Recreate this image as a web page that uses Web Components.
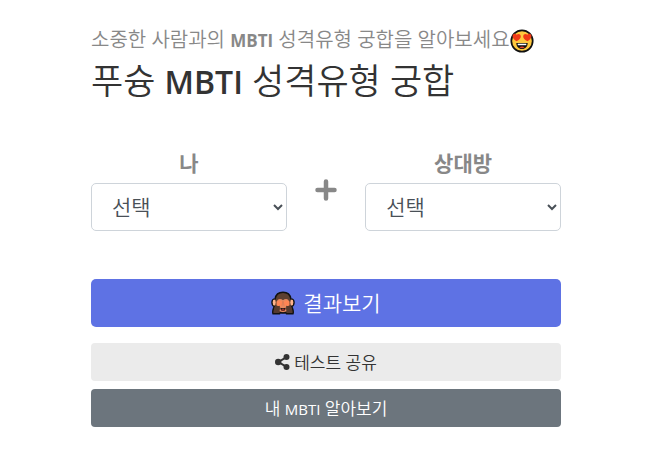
<!DOCTYPE html>
<html lang="ko">
<head>
<meta charset="utf-8">
<meta name="viewport" content="width=device-width, initial-scale=1">
<title>푸슝 MBTI 성격유형 궁합</title>
<style>
body { margin: 0; background: #fff; color: #333; font-family: "Open Sans", "Noto Sans CJK KR", sans-serif; font-size: 16px; }
</style>
</head>
<body>
<match-page></match-page>
<script>
const define = (name, html, setup) => {
  const template = document.createElement('template');
  template.innerHTML = html;
  customElements.define(name, class extends HTMLElement {
    constructor() {
      super();
      this.attachShadow({ mode: 'open' }).append(template.content.cloneNode(true));
    }
    connectedCallback() { if (setup) setup(this, this.shadowRoot); }
  });
};

define('love-face', `
<style>:host{display:inline-block;width:24px;height:24px} svg{display:block;width:100%;height:100%}</style>
<svg viewBox="0 0 24 24" aria-hidden="true">
  <circle cx="12" cy="12" r="10.7" fill="#ffc83d" stroke="#111" stroke-width="1.7"/>
  <path d="M6.5 12.2C3.8 10.5 2.2 8.6 2.6 6.5 3 4.500 5.400 4 6.700 5.800 8.100 4.400 10.600 5 10.800 7.200 10.900 9.300 9.200 11.100 6.500 12.200Z" fill="#f03a17"/>
  <path d="M17.500 12.200C20.200 10.500 21.800 8.600 21.400 6.500 21 4.500 18.600 4 17.300 5.800 15.900 4.400 13.400 5 13.200 7.200 13.100 9.300 14.800 11.100 17.500 12.200Z" fill="#f03a17"/>
  <path d="M6.300 14H17.700C17.700 17.600 15.300 20 12 20S6.300 17.600 6.300 14Z" fill="#111"/>
  <path d="M7.700 14.700H16.300V16.200H7.700Z" fill="#fff"/>
  <path d="M9.300 18.300Q12 16.800 14.700 18.300 12 20 9.300 18.300Z" fill="#e8432c"/>
</svg>`);

define('shy-monkey', `
<style>:host{display:inline-block;width:24px;height:24px} svg{display:block;width:100%;height:100%}</style>
<svg viewBox="0 0 24 24" aria-hidden="true">
  <path d="M12 1.300C7.500 1.300 4.700 4 4.100 8 1.900 7.900 1 9.300 1 11.300S2 15 3.400 15.400C2.200 17.700 1.200 20.200 2 22.700H8.700L9.300 21.500Q12 22.700 14.700 21.500L15.300 22.700H22C22.800 20.200 21.800 17.700 20.600 15.400 22 15 23 13.300 23 11.300S22.100 7.900 19.900 8C19.300 4 16.500 1.300 12 1.300Z" fill="#5d4031" stroke="#111" stroke-width="1.500" stroke-linejoin="round"/>
  <ellipse cx="3.200" cy="11.500" rx="1.500" ry="2.900" fill="#ffb48c"/>
  <ellipse cx="20.800" cy="11.500" rx="1.500" ry="2.900" fill="#ffb48c"/>
  <path d="M6 11C6 7.700 9.700 7.100 12 9.300 14.300 7.100 18 7.700 18 11L17 17.500Q16 21 12 21T7 17.500Z" fill="#e98a60"/>
  <path d="M5.500 10.600Q8 8.400 11.400 10.700L10.800 14.500Q8 15.700 5.500 14.500ZM18.500 10.600Q16 8.400 12.600 10.700L13.200 14.500Q16 15.700 18.500 14.500Z" fill="#ff8655"/>
  <path d="M11.600 10.300L11 14.700M12.400 10.300L13 14.700" stroke="#c96a48" stroke-width=".4" fill="none"/>
  <path d="M4.200 14.300Q6.500 15.500 8.800 14.800 9.600 18.500 8 22H2.800Q2.500 18 4.200 14.300ZM19.800 14.300Q17.500 15.500 15.200 14.800 14.400 18.500 16 22H21.200Q21.500 18 19.800 14.300Z" fill="#553a2e"/>
  <path d="M9.300 16.800Q12 17.600 14.700 16.800 14.500 20 12 20T9.300 16.800Z" fill="#241414"/>
  <path d="M10.200 18.800Q12 17.800 13.800 18.800 12 20.300 10.200 18.800Z" fill="#ef4638"/>
</svg>`);

define('share-icon', `
<style>:host{display:inline-block;width:15px;height:16px} svg{display:block;width:100%;height:100%}</style>
<svg viewBox="0 0 15 16" aria-hidden="true"><path d="M11.500 3.200L3.500 8 11.500 12.800" fill="none" stroke="currentColor" stroke-width="2"/><circle cx="11.500" cy="3" r="3" fill="currentColor"/><circle cx="3.200" cy="8" r="3.200" fill="currentColor"/><circle cx="11.500" cy="13" r="3" fill="currentColor"/></svg>`);

define('page-heading', `
<style>
:host{display:block}
p{margin:0;display:flex;align-items:center;color:#888;font-size:20px;line-height:32px;font-weight:350;white-space:nowrap}
h1{margin:0;font-size:35px;line-height:48px;font-weight:350;color:#333;white-space:nowrap}
</style>
<p><span><slot name="lead"></slot></span><love-face></love-face></p>
<h1><slot></slot></h1>`);

define('type-picker', `
<style>
:host{display:block;min-width:0}
label{display:block;text-align:center;color:#888;font-size:21px;line-height:32px;font-weight:700;margin-bottom:4px}
select{display:block;box-sizing:border-box;width:100%;height:48px;margin:0;padding:0 0 0 16px;border:1px solid #ced4da;border-radius:5px;background:#fff;color:#495057;font:350 21px "Open Sans","Noto Sans CJK KR",sans-serif}
</style>
<label for="type"></label>
<select id="type"><option>선택</option></select>`, (host, root) => {
  root.querySelector('label').textContent = host.getAttribute('label');
});

define('action-button', `
<style>
:host{display:block}
button{display:flex;align-items:center;justify-content:center;gap:4px;box-sizing:border-box;width:100%;height:38px;border:0;border-radius:4px;padding:0;background:#ebebeb;color:#333;font:350 17px "Open Sans","Noto Sans CJK KR",sans-serif;cursor:pointer}
.text{padding-bottom:2px}
:host([kind=primary]) button{height:48px;gap:8px;border-radius:5px;background:#5e72e4;color:#fff;font-size:21px}
:host([kind=dark]) button{background:#6c757d;color:#fff}
</style>
<button type="button"><slot name="icon"></slot><span class="text"><slot></slot></span></button>`);

define('match-page', `
<style>
:host{display:block;padding:24px 88px 36px 91px}
.lead b{font-weight:700;font-size:17px}
.name{font-weight:600;font-size:32px}
.latin{font-size:15px;font-weight:400}
.pair{display:grid;grid-template-columns:5fr 2fr 5fr;margin-top:41px}
.plus{display:flex;justify-content:center;align-items:center;color:#888}
.plus svg{width:22px;height:22px;margin-top:2px}
.actions{display:grid;gap:8px;margin-top:48px}
action-button[kind=primary]{margin-bottom:8px}
</style>
<main>
<page-heading><span slot="lead" class="lead">소중한 사람과의 <b>MBTI</b> 성격유형 궁합을 알아보세요</span>푸슝 <b class="name">MBTI</b> 성격유형 궁합</page-heading>
<div class="pair">
  <type-picker label="나"></type-picker>
  <div class="plus"><svg viewBox="0 0 22 22" aria-hidden="true"><path d="M11 2.500V19.500M2.500 11H19.500" stroke="currentColor" stroke-width="4.500" stroke-linecap="round"/></svg></div>
  <type-picker label="상대방"></type-picker>
</div>
<div class="actions">
  <action-button kind="primary"><shy-monkey slot="icon"></shy-monkey>결과보기</action-button>
  <action-button><share-icon slot="icon"></share-icon>테스트 공유</action-button>
  <action-button kind="dark">내 <span class="latin">MBTI</span> 알아보기</action-button>
</div>
</main>`);
</script>
</body>
</html>
